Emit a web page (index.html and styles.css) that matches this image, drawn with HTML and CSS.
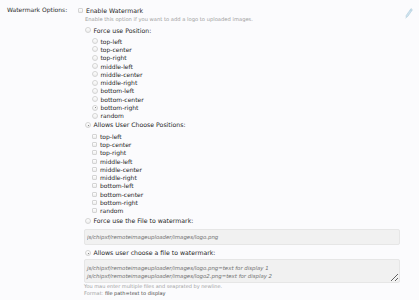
FILE: index.html
```html
<!DOCTYPE html>
<html lang="en">
<head>
    <meta charset="UTF-8">
    <title>Watermark Options</title>
    <link rel="stylesheet" href="styles.css">
</head>
<body>
    <!-- Watermark setting row -->
    <div class="setting-row">
        <div class="setting-label">Watermark Options:</div>
        <div class="setting-field">
            <label class="main-opt"><input type="checkbox" class="box"> Enable Watermark</label>
            <p class="hint">Enable this option if you want to add a logo to uploaded images.</p>

            <div class="choice">
                <label class="main-opt"><input type="radio" name="mode" class="dot"> Force use Position:</label>
                <ul class="sub-list">
                    <li><label><input type="radio" name="pos" class="dot"> top-left</label></li>
                    <li><label><input type="radio" name="pos" class="dot"> top-center</label></li>
                    <li><label><input type="radio" name="pos" class="dot"> top-right</label></li>
                    <li><label><input type="radio" name="pos" class="dot"> middle-left</label></li>
                    <li><label><input type="radio" name="pos" class="dot"> middle-center</label></li>
                    <li><label><input type="radio" name="pos" class="dot"> middle-right</label></li>
                    <li><label><input type="radio" name="pos" class="dot"> bottom-left</label></li>
                    <li><label><input type="radio" name="pos" class="dot"> bottom-center</label></li>
                    <li><label><input type="radio" name="pos" class="dot" checked> bottom-right</label></li>
                    <li><label><input type="radio" name="pos" class="dot"> random</label></li>
                </ul>

                <label class="main-opt"><input type="radio" name="mode" class="dot" checked> Allows User Choose Positions:</label>
                <ul class="sub-list checks">
                    <li><label><input type="checkbox" class="box"> top-left</label></li>
                    <li><label><input type="checkbox" class="box"> top-center</label></li>
                    <li><label><input type="checkbox" class="box"> top-right</label></li>
                    <li><label><input type="checkbox" class="box"> middle-left</label></li>
                    <li><label><input type="checkbox" class="box"> middle-center</label></li>
                    <li><label><input type="checkbox" class="box"> middle-right</label></li>
                    <li><label><input type="checkbox" class="box"> bottom-left</label></li>
                    <li><label><input type="checkbox" class="box"> bottom-center</label></li>
                    <li><label><input type="checkbox" class="box"> bottom-right</label></li>
                    <li><label><input type="checkbox" class="box"> random</label></li>
                </ul>

                <label class="main-opt"><input type="radio" name="file" class="dot"> Force use the File to watermark:</label>
                <input type="text" class="file-input" value="js/chipxf/remoteimageuploader/images/logo.png">

                <label class="main-opt file-opt2"><input type="radio" name="file" class="dot" checked> Allows user choose a file to watermark:</label>
                <textarea class="file-area">js/chipxf/remoteimageuploader/images/logo.png=text for display 1
js/chipxf/remoteimageuploader/images/logo2.png=text for display 2</textarea>
            </div>

            <p class="hint note">You mau enter multiple files and seaprated by newline.</p>
            <p class="hint note">Format: <span class="fmt">file path=text to display</span></p>
        </div>
        <a href="#" class="edit-link" title="Edit">
            <svg width="8" height="11" viewBox="0 0 8 11">
                <path d="M6 0.6 L7.4 1.8 L2.8 8.4 L1 9.6 L1.2 7.4 Z" fill="#cfe3ee" stroke="#a6c6d8" stroke-width="0.5"/>
                <path d="M5.1 1.8 L6.5 3" stroke="#a6c6d8" stroke-width="0.5"/>
                <path d="M0.3 10.6 L1.2 9.6" stroke="#b8d4e2" stroke-width="0.5"/>
            </svg>
        </a>
    </div>
</body>
</html>
```

FILE: styles.css
```css
/* General */
body {
    margin: 0;
    background: #fbfbfd;
    font-family: "DejaVu Sans", Verdana, sans-serif;
    color: #1e1e1e;
}

/* Row */
.setting-row {
    display: flex;
    padding-top: 5px;
}

.setting-label {
    flex: none;
    width: 71px;
    padding-left: 7px;
    white-space: nowrap;
    font-size: 6px;
    line-height: 10px;
    color: #2a2a2a;
}

.setting-field {
    flex: 1;
    min-width: 0;
}

.edit-link {
    flex: none;
    width: 8px;
    margin: -1px 6px 0 4px;
}

/* Options */
.main-opt {
    display: flex;
    align-items: center;
    height: 10px;
    font-size: 6.2px;
    white-space: nowrap;
}

.choice {
    margin-top: 2px;
    padding-left: 7px;
}

.hint {
    margin: 0 0 0 7px;
    font-size: 5.2px;
    line-height: 8px;
    color: #a0a0a0;
    white-space: nowrap;
}

.sub-list {
    list-style: none;
    margin: 2px 0 0 0;
    padding: 0 0 0 7px;
}

.sub-list li {
    display: flex;
    align-items: center;
    height: 8.3px;
    font-size: 6px;
}

.sub-list label {
    display: flex;
    align-items: center;
}

.sub-list.checks {
    margin-top: 2px;
    margin-bottom: 1px;
}

/* Custom radio and checkbox */
.dot, .box {
    -webkit-appearance: none;
    appearance: none;
    margin: 0 2.5px 0 0;
    width: 6px;
    height: 6px;
    border: 0.8px solid #d4d4d4;
    background: linear-gradient(#fff, #ededed);
    flex: none;
}

.dot {
    border-radius: 50%;
    position: relative;
}

.dot:checked::after {
    content: "";
    position: absolute;
    left: 1.7px;
    top: 1.7px;
    width: 1.2px;
    height: 1.2px;
    border-radius: 50%;
    background: #666;
}

.box {
    border-radius: 1px;
    width: 5px;
    height: 5px;
    margin-right: 3px;
}

/* File fields */
.file-input, .file-area {
    display: block;
    box-sizing: border-box;
    width: 316px;
    margin-left: -1px;
    border: 1px solid #e6e6e6;
    border-radius: 2px;
    background: #f1f1f1;
    font-family: "DejaVu Sans", Verdana, sans-serif;
    font-style: italic;
    font-size: 5.4px;
    color: #707070;
    padding: 0 2px;
}

.file-input {
    height: 16px;
    margin-top: 3px;
}

.file-opt2 {
    margin-top: 3px;
}

.file-area {
    height: 24px;
    margin-top: 1px;
    line-height: 8px;
    padding-top: 4px;
    resize: vertical;
    overflow: hidden;
}

.note {
    margin-left: 6px;
    line-height: 7px;
    font-size: 5px;
}

.note:first-of-type {
    margin-top: 2.5px;
}

.fmt {
    color: #444;
}
```
